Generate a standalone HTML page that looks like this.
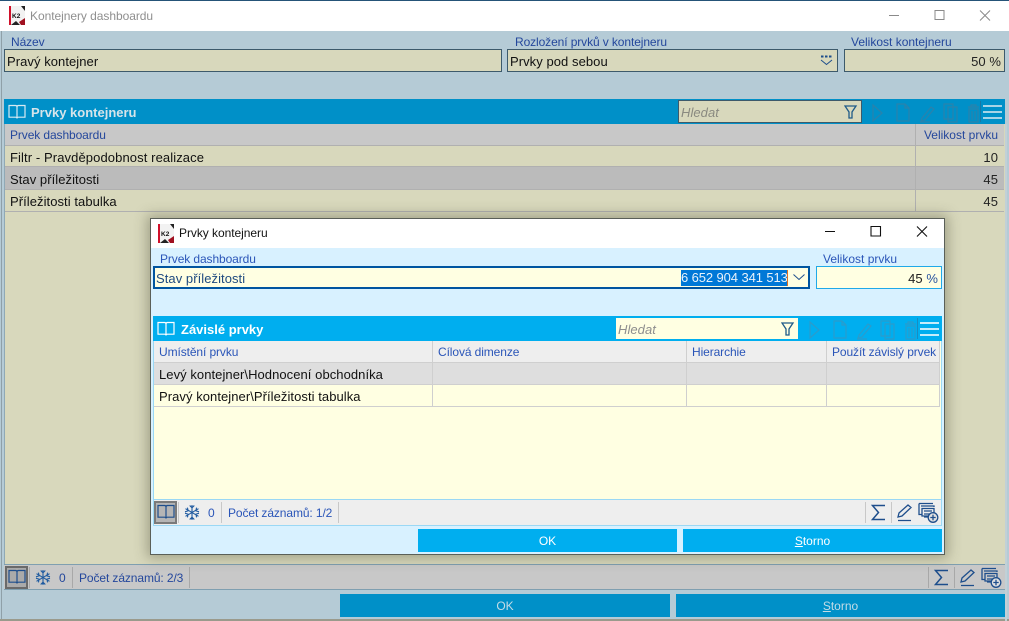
<!DOCTYPE html>
<html><head><meta charset="utf-8"><style>
html,body{margin:0;padding:0}
body{width:1009px;height:621px;overflow:hidden;position:relative;background:#b5cbd6;font-family:"Liberation Sans",sans-serif;font-size:13px;letter-spacing:.06px;color:#111}
div,svg{position:absolute;box-sizing:border-box}
.t{white-space:nowrap;line-height:14px}
.l{color:#24479c;font-size:12px;letter-spacing:-.1px}
.dl{color:#2a55b8;font-size:12px;letter-spacing:-.1px}
.b{font-size:12px;letter-spacing:0;text-align:center;line-height:25px}
</style></head><body>
<svg width="0" height="0" style="display:none"><defs>
<g id="logo"><rect x="0" y="0" width="2" height="19" fill="#d0102a"/><rect x="2" y="0" width="14" height="19" fill="#f2f2f2"/><path d="M12 0h4v5zM2 19l5-4 4 4z" fill="#222"/><path d="M10 16l6-4v7h-4z" fill="#a01020"/><text x="3" y="12" font-family="Liberation Sans" font-weight="bold" font-size="6.5" fill="#111" letter-spacing="0">K2</text></g>
<g id="book" fill="none" stroke-width="1.2"><path d="M1 2.500h6.500c1 0 1.500.5 1.500 1.500v11.500c0-1-.5-1.300-1.500-1.300H1zM17 2.500h-6.500C9.500 2.500 9 3 9 4v11.500c0-1 .5-1.300 1.500-1.300H17z"/></g>
<g id="snow" fill="none" stroke-width="1.100"><path d="M8 1v15M1.500 4.700l13 7.600M14.500 4.700l-13 7.600M5.700 1.500L8 3.800l2.300-2.300M5.700 15.500L8 13.200l2.300 2.300M1 7.800l3.200-1-.8-3.200M15 7.800l-3.200-1 .8-3.200M1 9.200l3.200 1-.8 3.200M15 9.200l-3.200 1 .8 3.200"/></g>
<g id="tools" fill="none" stroke-width="1.200"><path d="M1 2l9 8-9 8z"/><path d="M25 1h8l4 4v13H25zM33 1v4h4"/><path d="M50 15l9-11 3 2-9 11-4 1zM48 19h10"/><path d="M72 1h9v15h-9zM76 4h9v15h-9z"/><path d="M96 4h11M99 4V2h5v2M97 6h9v13h-9zM100 8v9M103 8v9"/></g>
<g id="stat" fill="none" stroke-width="1.300"><path d="M18 3.500H5.500l6 7-6 7H18" stroke-width="1.500"/><path d="M31 15l1-4 9-8 3 2.500-9 8.500zM31 18.500h13"/><path d="M52 1.500h14M52 1.500v11h3M54 4h13v1M55 6.500h12V14H55zM57 9h8M57 12h8M57 15h5"/><circle cx="66" cy="15.500" r="4.800" fill="#e0e0e0"/><path d="M63.300 15.500h5.400M66 12.800v5.400"/></g>
<g id="funnel" fill="none" stroke-width="1.300"><path d="M1 1h11L8 7v6H5V7z"/></g>
</defs></svg>

<!-- Main window -->
<div style="left:0;top:0;width:1009px;height:1px;background:#255378"></div>
<div style="left:0;top:1px;width:1009px;height:30px;background:#fff"></div>
<svg style="left:9px;top:6px" width="16" height="19"><use href="#logo"/></svg>
<div class="t" style="left:30px;top:9px;color:#8f8f8f;font-size:12px;letter-spacing:-.05px">Kontejnery dashboardu</div>
<svg style="left:880px;top:8px" width="120" height="16" fill="none" stroke="#8a8a8a"><path d="M9 7.500h10M55 2.500h9v9h-9zM100 2.500l10 10M110 2.500l-10 10"/></svg>
<div style="left:1px;top:31px;width:1px;height:590px;background:#8fa0a8"></div>

<div class="t l" style="left:11px;top:35px">Název</div>
<div style="left:4px;top:49px;width:498px;height:23px;background:#d8d8bc;border:1px solid #3d5a6b"></div>
<div class="t" style="left:7px;top:55px">Pravý kontejner</div>
<div class="t l" style="left:515px;top:35px">Rozložení prvků v kontejneru</div>
<div style="left:507px;top:49px;width:331px;height:23px;background:#d8d8bc;border:1px solid #3d5a6b"></div>
<div class="t" style="left:510px;top:55px">Prvky pod sebou</div>
<svg style="left:820px;top:55px" width="14" height="12" fill="none" stroke="#1e4e8c"><path d="M1 1.500h2.500M5 1.500h2.500M9 1.500h2.500" stroke-width="2"/><path d="M1 5l5.500 4.500L12 5"/></svg>
<div class="t l" style="left:851px;top:35px;letter-spacing:0">Velikost kontejneru</div>
<div style="left:844px;top:49px;width:161px;height:23px;background:#d8d8bc;border:1px solid #3d5a6b"></div>
<div class="t" style="right:8px;top:55px;color:#222">50 %</div>

<!-- Main panel -->
<div style="left:4px;top:99px;width:1001px;height:25px;background:#0090c8"></div>
<svg style="left:8px;top:103px;stroke:#d8eaf2" width="18" height="18"><use href="#book"/></svg>
<div class="t" style="left:31px;top:106px;font-weight:bold;color:#d6e4ea;letter-spacing:0">Prvky kontejneru</div>
<div style="left:678px;top:100px;width:184px;height:23px;background:#d8d8bc;border:1px solid #3d5a6b"></div>
<div class="t" style="left:681px;top:106px;font-style:italic;color:#8a8a80">Hledat</div>
<svg style="left:844px;top:105px;stroke:#1e5a88" width="14" height="15"><use href="#funnel"/></svg>
<svg style="left:872px;top:103px;stroke:#2a82ac" width="112" height="20"><use href="#tools"/></svg>
<div style="left:980px;top:101px;width:1px;height:21px;background:#1a78a4"></div>
<div style="left:983px;top:105px;width:19px;height:2px;background:#a8d4e6"></div>
<div style="left:983px;top:111px;width:19px;height:2px;background:#a8d4e6"></div>
<div style="left:983px;top:117px;width:19px;height:2px;background:#a8d4e6"></div>

<!-- Main grid -->
<div style="left:4px;top:124px;width:1001px;height:441px;background:#d8d8bc;border-left:1px solid #8fa9b6"></div>
<div style="left:5px;top:124px;width:999px;height:22px;background:#c8c8c8;border-bottom:1px solid #b0b0b0"></div>
<div style="left:5px;top:146px;width:999px;height:21px;background:#d8d8bc;border-bottom:1px solid #b0b0b0"></div>
<div style="left:5px;top:167px;width:999px;height:23px;background:#bbbbbb;border-bottom:1px solid #b0b0b0"></div>
<div style="left:5px;top:190px;width:999px;height:22px;background:#d8d8bc;border-bottom:1px solid #b0b0b0"></div>
<div style="left:915px;top:124px;width:1px;height:88px;background:#b0b0b0"></div>
<div class="t l" style="left:10px;top:128px">Prvek dashboardu</div>
<div class="t l" style="right:11px;top:128px;letter-spacing:0">Velikost prvku</div>
<div class="t" style="left:10px;top:151px;letter-spacing:.1px">Filtr - Pravděpodobnost realizace</div>
<div class="t" style="right:11px;top:151px;color:#222">10</div>
<div class="t" style="left:10px;top:173px">Stav příležitosti</div>
<div class="t" style="right:11px;top:173px;color:#222">45</div>
<div class="t" style="left:10px;top:195px">Příležitosti tabulka</div>
<div class="t" style="right:11px;top:195px;color:#222">45</div>

<!-- Main status -->
<div style="left:4px;top:564px;width:1001px;height:26px;background:#c8c8c8;border-top:1px solid #7f9fb0;border-bottom:1px solid #7f9fb0"></div>
<div style="left:5px;top:566px;width:23px;height:23px;background:#aaa;border:2px solid #6a6a6a"></div>
<svg style="left:8px;top:568px;stroke:#1e4e8c" width="18" height="18"><use href="#book"/></svg>
<div style="left:29px;top:567px;width:1px;height:21px;background:#a8a8a8"></div>
<svg style="left:35px;top:569px;stroke:#1e5aa0" width="16" height="17"><use href="#snow"/></svg>
<div class="t l" style="left:59px;top:571px">0</div>
<div style="left:72px;top:567px;width:1px;height:21px;background:#a8a8a8"></div>
<div class="t l" style="left:79px;top:571px">Počet záznamů: 2/3</div>
<div style="left:189px;top:567px;width:1px;height:21px;background:#a8a8a8"></div>
<svg style="left:930px;top:567px;stroke:#1e4e8c" width="74" height="22"><use href="#stat"/></svg>
<div style="left:928px;top:567px;width:1px;height:21px;background:#a8a8a8"></div>
<div style="left:954px;top:567px;width:1px;height:21px;background:#a8a8a8"></div>

<!-- Main buttons -->
<div class="t b" style="left:340px;top:594px;width:330px;height:23px;background:#0090c8;color:#c4dce6">OK</div>
<div class="t b" style="left:676px;top:594px;width:329px;height:23px;background:#0090c8;color:#c4dce6"><u>S</u>torno</div>
<div style="left:0;top:619px;width:1009px;height:2px;background:#9a9a8c"></div>
<div style="left:1005px;top:124px;width:2px;height:497px;background:#c2d0d6"></div>

<!-- Dialog -->
<div style="left:150px;top:218px;width:795px;height:337px;background:#d8f1ff;border:1px solid #5a5f58;box-shadow:0 0 12px 3px rgba(70,70,50,.38)"></div>
<div style="left:151px;top:219px;width:793px;height:29px;background:#fff"></div>
<svg style="left:158px;top:224px" width="16" height="19"><use href="#logo"/></svg>
<div class="t" style="left:179px;top:226px;font-size:12px;letter-spacing:-.05px">Prvky kontejneru</div>
<svg style="left:825px;top:224px" width="112" height="16" fill="none" stroke="#111"><path d="M0 7.500h10M46 2.500h9.500v9.500H46zM92 2.500l10 10M102 2.500l-10 10" stroke-width="1.100"/></svg>

<div class="t dl" style="left:160px;top:252px">Prvek dashboardu</div>
<div style="left:153px;top:266px;width:657px;height:23px;background:#ffffe2;border:2px solid #0055a0"></div>
<div class="t" style="left:156px;top:272px;color:#1e4a80">Stav příležitosti</div>
<div class="t" style="left:681px;top:270px;width:106px;height:16px;background:#0078d7;color:#e8f2fa;line-height:16px;text-align:right;overflow:hidden;letter-spacing:-.1px">6 652 904 341 513</div>
<div style="left:787px;top:270px;width:1px;height:16px;background:#e07020"></div>
<svg style="left:792px;top:273px" width="14" height="9" fill="none" stroke="#1e4e8c"><path d="M1.500 1.500l5.500 5 5.500-5"/></svg>
<div class="t dl" style="left:823px;top:252px;letter-spacing:0">Velikost prvku</div>
<div style="left:816px;top:266px;width:126px;height:23px;background:#ffffe2;border:1px solid #1fa9e8"></div>
<div class="t" style="right:71px;top:272px"><span style="color:#222">45</span> <span style="color:#2a55a0">%</span></div>

<div style="left:153px;top:316px;width:789px;height:25px;background:#00aeef"></div>
<svg style="left:157px;top:320px;stroke:#fff" width="18" height="18"><use href="#book"/></svg>
<div class="t" style="left:181px;top:323px;font-weight:bold;color:#fff;letter-spacing:0">Závislé prvky</div>
<div style="left:616px;top:318px;width:182px;height:21px;background:#ffffe2"></div>
<div class="t" style="left:618px;top:323px;font-style:italic;color:#8e8e8e">Hledat</div>
<svg style="left:781px;top:322px;stroke:#1e5a88" width="14" height="15"><use href="#funnel"/></svg>
<svg style="left:809px;top:320px;stroke:#2a9ccc" width="112" height="20"><use href="#tools"/></svg>
<div style="left:917px;top:318px;width:1px;height:21px;background:#1a8cc0"></div>
<div style="left:920px;top:322px;width:19px;height:2px;background:#c4ecfb"></div>
<div style="left:920px;top:328px;width:19px;height:2px;background:#c4ecfb"></div>
<div style="left:920px;top:334px;width:19px;height:2px;background:#c4ecfb"></div>

<div style="left:153px;top:341px;width:789px;height:185px;background:#ffffe2;border:1px solid #9ad8f5;border-top:0"></div>
<div style="left:154px;top:341px;width:786px;height:22px;background:#eeeeee;border-bottom:1px solid #cfcfcf"></div>
<div style="left:154px;top:363px;width:786px;height:22px;background:#dedede;border-bottom:1px solid #cfcfcf"></div>
<div style="left:154px;top:385px;width:786px;height:22px;background:#ffffe2;border-bottom:1px solid #cfcfcf"></div>
<div style="left:432px;top:341px;width:1px;height:66px;background:#cfcfcf"></div>
<div style="left:686px;top:341px;width:1px;height:66px;background:#cfcfcf"></div>
<div style="left:826px;top:341px;width:1px;height:66px;background:#cfcfcf"></div>
<div style="left:939px;top:341px;width:1px;height:66px;background:#cfcfcf"></div>
<div class="t dl" style="left:159px;top:345px">Umístění prvku</div>
<div class="t dl" style="left:438px;top:345px">Cílová dimenze</div>
<div class="t dl" style="left:692px;top:345px">Hierarchie</div>
<div class="t dl" style="left:832px;top:345px">Použít závislý prvek</div>
<div class="t" style="left:159px;top:368px">Levý kontejner\Hodnocení obchodníka</div>
<div class="t" style="left:159px;top:390px">Pravý kontejner\Příležitosti tabulka</div>

<div style="left:154px;top:499px;width:787px;height:26px;background:#eeeeee;border-top:1px solid #9ad8f5"></div>
<div style="left:154px;top:501px;width:23px;height:23px;background:#b5b5b5;border:2px solid #7a7a7a"></div>
<svg style="left:157px;top:503px;stroke:#1e4e8c" width="18" height="18"><use href="#book"/></svg>
<div style="left:178px;top:502px;width:1px;height:21px;background:#c8c8c8"></div>
<svg style="left:184px;top:504px;stroke:#1e5aa0" width="16" height="17"><use href="#snow"/></svg>
<div class="t dl" style="left:208px;top:506px">0</div>
<div style="left:221px;top:502px;width:1px;height:21px;background:#c8c8c8"></div>
<div class="t dl" style="left:228px;top:506px">Počet záznamů: 1/2</div>
<div style="left:338px;top:502px;width:1px;height:21px;background:#c8c8c8"></div>
<svg style="left:867px;top:502px;stroke:#1e4e8c" width="74" height="22"><use href="#stat"/></svg>
<div style="left:865px;top:502px;width:1px;height:21px;background:#c8c8c8"></div>
<div style="left:891px;top:502px;width:1px;height:21px;background:#c8c8c8"></div>

<div class="t b" style="left:418px;top:529px;width:259px;height:23px;background:#00aeef;color:#fff">OK</div>
<div class="t b" style="left:683px;top:529px;width:259px;height:23px;background:#00aeef;color:#fff"><u>S</u>torno</div>
</body></html>
